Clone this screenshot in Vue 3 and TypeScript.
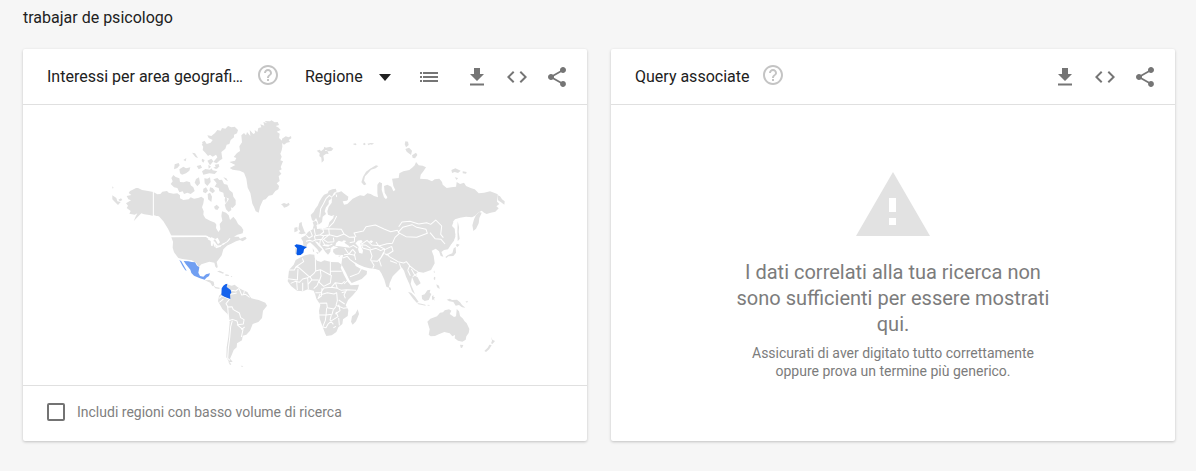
<script setup lang="ts">
import { ref } from 'vue'

const region = ref('Regione')
const includeLow = ref(false)

interface Action { label: string; path: string }
const actions: Action[] = [
  { label: 'Scarica', path: 'M19 9h-4V3H9v6H5l7 7 7-7zM5 18.500v2h14v-2H5z' },
  { label: 'Incorpora', path: 'M9.400 16.600L4.800 12l4.600-4.600L8 6l-6 6 6 6 1.400-1.400zm5.200 0l4.600-4.600-4.600-4.600L16 6l6 6-6 6-1.400-1.400z' },
  { label: 'Condividi', path: 'M18 16.080c-.76 0-1.440.3-1.960.77L8.910 12.700c.05-.23.09-.46.09-.7s-.04-.47-.09-.7l7.050-4.110c.54.5 1.250.81 2.040.81 1.660 0 3-1.340 3-3s-1.340-3-3-3-3 1.340-3 3c0 .24.04.47.09.7L8.040 9.810C7.500 9.310 6.790 9 6 9c-1.660 0-3 1.340-3 3s1.340 3 3 3c.79 0 1.500-.31 2.040-.81l7.120 4.160c-.05.21-.08.43-.08.65 0 1.610 1.310 2.920 2.920 2.920s2.920-1.310 2.920-2.920-1.310-2.920-2.920-2.920z' },
]
const helpPath = 'M11 18h2v-2h-2v2zm1-16C6.480 2 2 6.480 2 12s4.480 10 10 10 10-4.480 10-10S17.520 2 12 2zm0 18c-4.410 0-8-3.590-8-8s3.590-8 8-8 8 3.590 8 8-3.590 8-8 8zm0-14c-2.210 0-4 1.790-4 4h2c0-1.100.9-2 2-2s2 .9 2 2c0 2-3 1.750-3 5h2c0-2.250 3-2.500 3-5 0-2.210-1.790-4-4-4z'
</script>

<template>
  <main class="page">
    <h1 class="term">trabajar de psicologo</h1>
    <div class="cards">
      <section class="card">
        <header class="head">
          <h2 class="title geo">Interessi per area geografica</h2>
          <button class="help" type="button" aria-label="Guida"><svg viewBox="0 0 24 24"><path :d="helpPath" /></svg></button>
          <div class="picker">
            <select v-model="region" aria-label="Risoluzione">
              <option>Regione</option>
              <option>Città</option>
            </select>
            <svg class="caret" viewBox="0 0 24 24"><path d="M6 9l6 7 6-7z" /></svg>
          </div>
          <button class="icon list" type="button" aria-label="Elenco">
            <svg viewBox="0 0 24 24"><path d="M3 7h2v2H3zm0 4h2v2H3zm0 4h2v2H3zM6 7h15v2H6zm0 4h15v2H6zm0 4h15v2H6z" /></svg>
          </button>
          <button v-for="a in actions" :key="a.label" class="icon" type="button" :aria-label="a.label">
            <svg viewBox="0 0 24 24"><path :d="a.path" /></svg>
          </button>
        </header>

        <div class="map">
          <svg viewBox="-30 0 1290 780" role="img" aria-label="Mappa del mondo">
            <!-- Alaska, Canada and the Arctic islands -->
            <g class="land">
              <path d="M108 234L98 239 90 243 86 249 94 255 80 258 85 268 93 271 78 280 84 287 80 294 92 303 88 311 104 314 112 310 106 322 101 334 112 322 124 310 132 313 148 315 160 318V246L140 242 126 240 114 234z" />
              <path d="M160 246L172 253 181 252 187 245 201 243 206 248 220 251 232 250 240 256 240 265 250 270 266 268 272 262 282 266 294 264 304 260 312 266 310 280 306 292 311 304 310 314 316 325 330 332 345 338 349 344 348 354 355 366 361 358 359 342 367 332 364 318 366 304 378 308 386 316 390 330 400 320 408 330 414 342 424 350 430 360 428 370 412 374 402 380 416 380 420 386 436 380 440 386 428 394 420 390 408 394 392 402 372 410 355 410 345 396 330 384 320 377H214L204 356 190 334 178 320 160 316z" />
              <path d="M345 69L352 60 362 62 366 54 376 56 384 48 394 52 404 50 414 60 411 70 402 74 402 82 392 90 388 102 380 104 376 116 364 126 367 146 358 152 350 160 340 156 352 142 348 134 338 140 330 134 324 138 316 128 308 120 310 108 306 96 314 92 320 102 332 98 338 90 326 84 322 76 334 78z" />
              <path d="M220 195L227 201 238 205 240 216 251 217 260 214 270 217 272 226 280 232 284 243 272 252 262 248 252 252 248 244 238 247 232 234 222 232 212 222 218 214 214 204z" />
              <path d="M340 208L352 204 358 210 366 209 372 222 382 224 388 240 398 248 400 260 407 270 407 284 398 294 388 290 380 278 387 266 372 260 370 248 358 244 356 234 344 230 350 220z" />
              <path d="M224 163L236 159 239 166 232 174 222 178zM238 178L250 170 258 175 271 172 268 182 258 190 246 194 240 190zM250 150L259 144 257 154zM276 128L285 130 294 144 287 142zM290 168L302 165 306 173 296 178zM306 184L316 177 330 179 334 175 338 181 352 184 344 192 328 190 310 194zM288 207L297 202 300 220 292 229 284 218zM313 205L322 206 330 202 332 216 322 228 314 220zM330 232L338 234 345 243 338 250 328 242zM310 236L318 232 324 242 317 250 309 246zM376 258L382 268 378 282 374 270zM374 284L382 276 392 288 394 300 386 306 378 298zM323 252L330 248 336 260 334 276 324 268zM342 290L350 284 358 292 352 300 345 298zM36 229L41 233 38 236zM37 256L49 264 52 274 62 276 54 285 44 275 37 268zM55 269L63 265 67 270 60 274zM306 146L314 150 310 158 305 153zM322 152L334 146 340 154 330 166zM344 164L356 162 358 170 348 172zM305 104L312 98 318 106 312 112zM325 164L333 170 326 176z" />
              <path d="M370 202L379 205 384 214 377 210zM340 173L350 169 356 173 348 177z" />
              <path class="borders" d="M160 244V320M206 379H319L338 388M158 318L176 320" />
            </g>
            <!-- Greenland, Iceland, Svalbard, Scandinavia -->
            <g class="land" transform="translate(360 0)">
              <path d="M64 76l8-7 6 7 3-10 10 12-2-18 11 12 5-3-1-9 8 6 3-12 9-2-3-9 12 4-3-11 11 3-7-6 16 1 4-3 10 6 9-1 4 9-10 3 9 5 6 7-12 5 9 6-2 13 9 8 1 18-2 11-4 10 4 9-4 11 8 3-7 17 3 7-8 4 7 9-8 8 3 14-9 7 7 8-2 10-9 5-9 12-11 2-9 11-8 2-5 11-4 9-4 18-9-4-5-13-5-10-6-32-8-16-4-27-7-18-13-6-21-3-9-5 17-9-18-9 17-4 4-8-8-3 10-12 9-6-2-14 8-12z" />
              <path d="M186 86l11-7 9 3 7-4 1 7-8 5 4 6-10 2-8 6-6-5zM183 283l9-4 8 3 6-4 3 6-8 6-9 3-3-5zM290 122l9-3 4 5 8-7 2-7 6 4-4 9 7-1 4 10-8-1-8 6 2 14-7 7-1-15-6-5 1-8zM317 113l14-3 9 6-6 7-9 1-9-5z" />
              <path d="M276 331L272 315 281 306 286 296 293 287 298 275 306 262 312 254 323 250 326 242 337 238 347 236 350 244 342 248 338 256 334 266 326 272 326 282 318 292 314 304 318 312 308 320 306 336 296 344 292 332 288 324 282 334z" />
              <path d="M326 290L335 278 336 262 344 254 348 252 350 270 354 286 356 302 346 314 334 318 324 314 322 304zM346 248l10-1 8-3 7 6 14 10-2 11-14-1-9-4-10-4z" />
              <path class="borders" d="M299 322L302 296 310 282 318 266 328 256 336 262M349 254L352 280 357 300 350 318" />
            </g>
            <!-- Russia and the northern islands -->
            <g class="land" transform="translate(720 0)">
              <path d="M-12 262L0 256 14 256 24 264 20 272 8 274 12 284 22 282 28 276 38 266 50 260 60 256 72 258 82 250 92 252 102 258 114 262 112 250 112 224 118 216 126 220 125 240 132 262 138 268 142 262 134 248 132 228 142 224 154 230 160 244 166 240 160 228 158 216 156 206 176 204 178 190 190 184 208 180 218 172 224 166 228 156 236 166 248 167 258 172 250 184 242 194 240 206 262 208 276 214 284 208 298 206 306 216 308 224 320 234 334 232 348 230 350 216 360 222 372 218 378 228 392 234 404 238 416 250 432 248 450 244 466 250 473 253 471 275 478 282 469 289 476 295 466 305 452 308 440 312 432 308 425 302 414 308 405 317 396 322 378 320 360 323 345 328 338 336 332 346 341 356 346 372 342 392 330 405H0L-14 370-20 320-8 300-14 284z" />
              <path d="M425 308l-8-2-9 9-6 13-5 18 3 17 8-7 8-16 2-16zM472 255l8 4 6 9 8 6-1 10-10-7-9-6zM64 217l5-17 9-15 12-9 18-10 7 2-8 7-14 4-9 11-9 9-3 13 7 11-7 3zM196 94l8 1 2 10-8 7-4-9zm0 23l11-4 9 9-3 13-13-10zm20 19l12-8 4 7-7 10-7-1zM334 180l12-5 16 7-8 7-10-3-8 3zM368 184l12 2-2 5-10-1zM344 202l10 2-4 6zM38 102l8-2 4 3-4 3zm30 0l6-4 3 5-4 3zm14-1l10-2 10 1-6 4-6-1-4 3z" />
            </g>
            <!-- Europe, Asia, Africa -->
            <g class="land" transform="translate(510 330)">
              <path d="M93 54L107 46 114 36 128 28 131 16 140 18 141 27 163 25 174 21 178 7 190 -6 218 -20 540 -2 550 6 546 18 554 26 556 50 548 66 534 88 522 90 514 96 520 110 512 108 507 94 497 86 485 92 491 108 494 130 483 150 460 158 444 155 438 162 447 180 452 190 440 198 433 188 426 171 422 192 435 223 426 214 418 192 408 170 402 152 395 142 386 151 368 169 359 189 356 203 349 200 343 179 334 160 328 151 316 147 298 145 283 141 267 134 253 126 257 138 273 147 291 153 290 163 275 177 245 189 238 180 227 157 214 133 217 113 220 105 197 104 189 96 190 88 205 82 190 78 182 84 181 95 174 104 166 96 158 84 150 74 143 66 134 64 146 78 157 88 148 98 142 88 130 76 120 67 112 72 109 81 100 79 99 65z" />
              <path class="sea" d="M196 78l2-9 8-7 10 3 5-4 8 2-6 5 14 10 2 5-16-2-14-2zM256 70l8-8 10-2 4 6-7 4 3 12 5 10-2 9-10-3-3-11 2-6zM296 66l7-5 6 3-4 5z" />
              <path d="M76 85l5-1-1 18-5-1zM88 9l7-3 1 9 8 21 4 4-14 3-9-3 6-6-6-7zM73 23l9-2 1 12-10 4zM128 6l10-4 5 10-8 10-4-6zM128 84l5 10-4 2zm10 12l9 2-5 4zM204 108l9-2-5 4z" />
              <path d="M92 112l13-6 14-3 14 1 1 9 7 9 12 4 10-5 20 5 22 1 10 7-3 9 10 22 10 19 10 12 25-2-4 14-14 17-15 15-7 16 8 14-2 18-14 10-2 14-12 10-6 14-14 10-16 2-4-8-8-22-8-22-2-24 4-18-12-18-4-14-4-10-18-4-14 6-18-2-18-14-10-14 2-16 2-18 14-16 6-14zM263 268l4 14-9 22-10 10-5-9 3-16 10-8z" />
              <path class="borders" d="M56 150h17l4-8 8-1 34 30 12-10 6-8-1-37 3-10M97 115l4 10-24 16M84 146l-2 34-28-4M62 190l14-6 12 3 10-10 15-4 8-4M137 153l14-4 30 16V125M181 154h34M151 150l2 18-6 18 14 13 20-10 3-24M120 171l6 8 20 1M113 175l2 33M98 188v25M80 185l2 25M126 179l-12 14M147 181l-6 16-10 9M136 218h16l10-14 22-2 12-14 20 3 8-7M196 188l6 17 12 6 16-2 28 2M184 202l18 3M230 209l-8 16 4 10M150 222l-6 14 10-8 2-24M152 224l20-6 20 4 8-4 2 24-4 14 10 4M148 250l22-1 2 14 20 4 6-8M146 285h22l18-2 4-15M170 263l-2 22-2 16-8 20 10 2 6-11 12-11 18-11-6-14M184 284l-4 16 10 13M206 240l18 12M203 257l18 8 10-2M206 254l4 18-14 10M222 192l12-12M206 294l2 22M190 323l8-4M215 218l10-3" />
              <path class="borders" d="M109 46l8 8 10-6-6-16M108 64l11-3 8 3 9-4-3-12 18-4 10-8-4-12M151 27l25-1 2 18-18 3-9-3M135 60l20-2 7-11M155 58l9 16 14 2 9-4M151 58l-2 16M178 44l23 6 21-8-8-14-38-2M178 44l-18 14 13 9 19-2M176 22l14-14 10-20M192 65l-2-12M158 76l18 3M166 88l15-3M136 45l-4-20M222 42l16 10 16-1-1 14-14 3M238 82l12-6 12 8M224 84l12 18 18 4 3 14M222 104l14-1 12-15M218 114l14-5 8 10 22 16M248 88l8 10-4 10M240 170l26-10 8-14M278 84l22 6 6 18-4 12 10 16-4 10M300 90l18-5 14 7 12-6M302 122l20 2 11-12 8-15M278 84l-4-10 14 2 14 9M258 51l-6-12 28-6 8-13 28-5 26 12 20 8 20-4 6 9-13 12-8 18-16 1-22 6-24-2-14-14-14 10-14-8M318 66l8 12 20 10 19-9M384 37l24 13 32 2 32-12-4-12-28-6-14-8-28 8-14 15M480 38l15 18 18 2 12 14M446 12l24-4 12 5 15-13 18 18-3 25 8 10M365 79l4 14-18 12-7-4M344 86l-2 13-14 22 6 18M350 101l8 9 26 15 17 4M360 122l21 8M388 130l5 15M401 129l8-4 10 12-6 14M413 151l8 16M418 137l18 14 8 4M424 147l10 18 14 8M428 170l10-7M386 20L396 6 420 4 434 8 446 12" />
              <path class="spain" d="M73 77l6-4 14 2 9 4 9 2-9 7-2 10-8 7-10 1-3-4 2-17z" />
            </g>
            <!-- United States, Central and South America -->
            <g class="land" transform="translate(150 345)">
              <path d="M64 37l104-1 10 8 12 1 2 14 10 6 12-3 14-10 8-9 4 2-2 10-8 8-10 10-5 18-11 15-4 5 3 14-2 5-5-5-3-12-15-3-12 4-12 4-8 9-7-13-14-8-28-4-12-3-13-17-4-14 1-18z" />
              <path class="sea" d="M173 43l12-6 11 5-6 4-2 17-5-1-1-14zM195 43l8-5 7 14-6 6-4-8zM196 66l18-6-2 5-14 5zM215 57l10-4-3 6z" />
              <path class="borders" d="M56 34H169L188 44 194 64 212 62 232 50 240 40" />
              <path d="M164 166l14-1 13 5 2 11-6 3-6-11zM189 181l8 5 12 2-1 4-12-2zM201 139l8-2 13 6-3 3-12-4zM226 148l9 1 3 4-12-1zM242 153l5 1-3 3z" />
              <path d="M227 177l18 5 9-3 8 7 14 8 16 7 7 12 5 7 22 5 20 8 5 9-12 15-3 22-11 12-17 6-8 20-11 12-11 3-2 14-15 9-1 12-9 8-6 15-5 11 8 9-10 2-9-15 1-30 5-32 4-43-6-24-16-16-13-23 3-17 9-9zM234 408l10 10-4 2zM272 422l8 1-4 3z" />
              <path class="borders" d="M208 220l8-8 14 7 9 3-11 14 6 10 12-1 4 9 18 10 4 14 10 6-2 13-16 2-3-11-14-5-10 4-2-16-2-26M247 287l-5 18-3 34-4 31-2 30 7 6M261 299l18 15-5 22M274 314l10-8M244 196l13 2 10-8M267 190l8 20 12-2 12 9M283 198l-3 12M260 204l-18 4M208 232l12-10" />
              <path class="mexico" d="M101 108l14 1 10 2 10 1 6 10 7 5-3 16 5 10 10 2 8-7 12-3-3 8-8 5-5 6-14-4-18-8-8-8-3-10-14-17z" />
              <path class="mexico" d="M88 105l6 4 8 14 8 14-4-1-8-12z" />
              <path class="colombia" d="M226 178l6-2-2 10 12 9 2 8-4 5 1 14-10-4-8-3-9-5 1-20 5-8z" />
            </g>
            <!-- Oceania and the Pacific islands -->
            <g class="land" transform="translate(870 330)">
              <path d="M112 305l9-9 20-7 9-11 9-1 5-6 13-3 7 4-5 10 13 9 6-2 2-22 7 7 3 14 9 8 4 7 7 7 8 17-2 12-7 10-2 10-10 6-13-3-10-7 1-10-8 4-8-9-16-4-17 7-11 5-13 1-6-5 3-16zM210 374l10 1-4 9-4-1zM283 393l10-10 5-9 7 1-7 12-10 9zM303 350l4 9 8 4-8 9-4-2 3-8z" />
              <path d="M170 239l9-3 7 4 15-1 9 8 6 8 10 8-10-1-9-7-10 2-7-11-12-2zM95 226l9-3 8-12 9-2-2 9 5 4-8 18-12 3-8-6zM54 215l10 4 11 11 11 16-6 2-10-11zM82 249l12 2 12 3 1 3-22-4zM126 228l5-2-1 5 5 1-3 4 2 6-5-4-3 3zM132 170l4 2-1 9-4-4zM139 193l8 4 2 10-8-5zM200 71l9 3-7 7-4-4zM197 81l1 17-8 10-15 1-6 5-3-3 8-6 13-5 4-15zM203 4l4 18-1 14 3 20-6 8-1-30zM113 254l8 2-8 1zM226 245l8-3-3 6zM-4 201l6 2 1 8-5-2zM132 151l3 8-4-2z" />
            </g>
          </svg>
        </div>

        <footer class="foot">
          <label class="check">
            <input v-model="includeLow" type="checkbox" />
            <span>Includi regioni con basso volume di ricerca</span>
          </label>
        </footer>
      </section>

      <section class="card">
        <header class="head">
          <h2 class="title">Query associate</h2>
          <button class="help" type="button" aria-label="Guida"><svg viewBox="0 0 24 24"><path :d="helpPath" /></svg></button>
          <span class="spacer"></span>
          <button v-for="a in actions" :key="a.label" class="icon" type="button" :aria-label="a.label">
            <svg viewBox="0 0 24 24"><path :d="a.path" /></svg>
          </button>
        </header>
        <div class="empty">
          <svg class="warning" viewBox="0 0 74 64"><path fill-rule="evenodd" d="M37 0l37 64H0zM33 26v14h7V26zM33 46v7h7v-7z" /></svg>
          <p class="message">I dati correlati alla tua ricerca non sono sufficienti per essere mostrati qui.</p>
          <p class="hint">Assicurati di aver digitato tutto correttamente oppure prova un termine più generico.</p>
        </div>
      </section>
    </div>
  </main>
</template>

<style>
body {
  margin: 0;
  background: #f6f6f6;
}
</style>

<style scoped>
.page {
  padding: 8px 21px 24px 23px;
  color: #212121;
  font-family: Roboto, "Liberation Sans", sans-serif;
  font-size: 16px;
}
.term,
.title {
  margin: 0;
  font-size: 16px;
  font-weight: 400;
  line-height: 20px;
}
.cards {
  display: grid;
  grid-template-columns: 1fr 1fr;
  gap: 24px;
  margin-top: 21px;
}
.card {
  display: flex;
  flex-direction: column;
  min-width: 0;
  background: #fff;
  border-radius: 2px;
  box-shadow: 0 1px 3px rgba(0, 0, 0, 0.22);
}
.head {
  display: flex;
  align-items: center;
  height: 55px;
  padding: 0 10px 0 24px;
  border-bottom: 1px solid #e0e0e0;
}
.title {
  white-space: nowrap;
}
.geo {
  flex: 0 1 197px;
  overflow: hidden;
  text-overflow: ellipsis;
}
button {
  display: flex;
  flex: none;
  align-items: center;
  justify-content: center;
  padding: 0;
  border: 0;
  background: none;
  cursor: pointer;
}
button svg,
.caret {
  width: 24px;
  height: 24px;
}
.help {
  margin: 0 0 4px 12px;
  fill: #c4c4c4;
}
.picker {
  display: flex;
  flex: none;
  align-items: center;
  margin-left: 25px;
  position: relative;
}
.picker select {
  width: 92px;
  padding: 0;
  border: 0;
  appearance: none;
  background: none;
  color: #212121;
  font: inherit;
  line-height: 24px;
}
.caret {
  position: absolute;
  right: 0;
  fill: #212121;
  pointer-events: none;
}
.icon {
  width: 40px;
  height: 40px;
  fill: #757575;
}
.list {
  margin: 0 8px 0 auto;
}
.spacer {
  flex: 1;
}
.map {
  flex: 1;
  padding: 5px 0 15px;
}
.map svg {
  display: block;
  width: 76.250%;
  max-width: 640px;
  margin: 0 auto;
}
.land {
  fill: #e0e0e0;
}
.sea {
  fill: #fff;
}
.borders {
  fill: none;
  stroke: #fff;
  stroke-width: 3;
  stroke-linejoin: round;
}
.spain {
  fill: #0759e8;
}
.colombia {
  fill: #1562ec;
}
.mexico {
  fill: #719ff2;
}
.foot {
  display: flex;
  align-items: center;
  height: 52px;
  padding: 0 24px 3px;
  border-top: 1px solid #e0e0e0;
}
.check {
  display: flex;
  align-items: center;
  gap: 12px;
  color: #808080;
  font-size: 14px;
  line-height: 18px;
}
.check input {
  width: 18px;
  height: 18px;
  margin: 0;
  border: 2px solid #737373;
  border-radius: 2px;
  appearance: none;
  background: #fff;
}
.check input:checked {
  background: #4285f4;
}
.empty {
  display: flex;
  flex: 1;
  flex-direction: column;
  align-items: center;
  padding: 67px 24px 0;
  color: #7c7c7c;
  text-align: center;
}
.warning {
  width: 74px;
  height: 64px;
  fill: #e2e2e2;
}
.message {
  max-width: 320px;
  margin: 23px 0 0;
  font-size: 20px;
  line-height: 26px;
}
.hint {
  max-width: 300px;
  margin: 7px 0 0;
  font-size: 14px;
  line-height: 18px;
}
</style>
